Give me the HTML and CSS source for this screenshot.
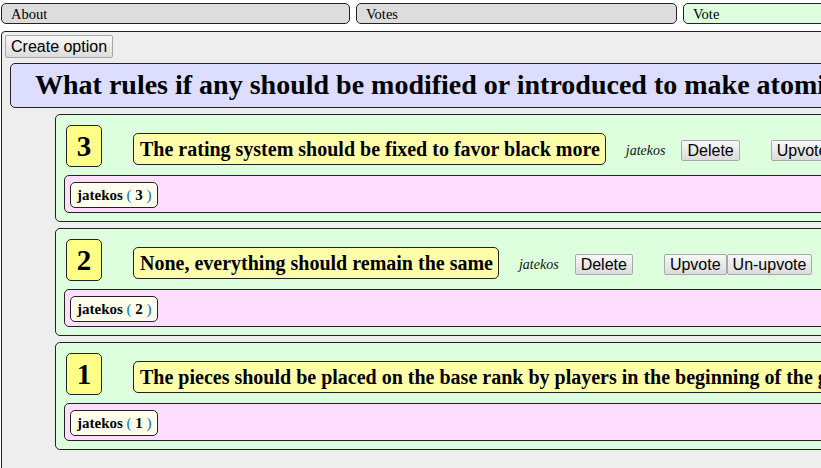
FILE: index.html
```html
<!DOCTYPE html>
<html lang="en">
<head>
  <meta charset="UTF-8" />
  <title>Vote</title>
  <link rel="stylesheet" href="styles.css">
</head>
<body>

  <!-- Tabs -->
  <div class="tabs">
    <div class="tab tab-about">About</div>
    <div class="tab tab-votes">Votes</div>
    <div class="tab tab-vote active">Vote</div>
  </div>

  <!-- Vote panel -->
  <div class="panel">
    <button class="btn">Create option</button>
    <div class="question">What rules if any should be modified or introduced to make atomic chess more balanced?</div>

    <div class="option">
      <div class="option-head">
        <div class="count">3</div>
        <div class="option-text">The rating system should be fixed to favor black more</div>
        <span class="author">jatekos</span>
        <button class="btn btn-delete">Delete</button>
        <button class="btn btn-up">Upvote</button><button class="btn">Un-upvote</button>
      </div>
      <div class="voters">
        <span class="voter">jatekos <span class="paren">(</span> 3 <span class="paren">)</span></span>
      </div>
    </div>

    <div class="option">
      <div class="option-head">
        <div class="count">2</div>
        <div class="option-text">None, everything should remain the same</div>
        <span class="author">jatekos</span>
        <button class="btn btn-delete">Delete</button>
        <button class="btn btn-up">Upvote</button><button class="btn">Un-upvote</button>
      </div>
      <div class="voters">
        <span class="voter">jatekos <span class="paren">(</span> 2 <span class="paren">)</span></span>
      </div>
    </div>

    <div class="option">
      <div class="option-head">
        <div class="count">1</div>
        <div class="option-text">The pieces should be placed on the base rank by players in the beginning of the game</div>
        <span class="author">jatekos</span>
        <button class="btn btn-delete">Delete</button>
        <button class="btn btn-up">Upvote</button><button class="btn">Un-upvote</button>
      </div>
      <div class="voters">
        <span class="voter">jatekos <span class="paren">(</span> 1 <span class="paren">)</span></span>
      </div>
    </div>
  </div>

</body>
</html>
```

FILE: styles.css
```css
* {
  box-sizing: border-box;
}

html, body {
  overflow: hidden;
}

body {
  margin: 0;
  padding: 3px 1px 0 1px;
  background: #fff;
  font-family: "Liberation Serif", "Times New Roman", serif;
  color: #000;
  width: max-content;
}

/* Tabs */
.tabs {
  display: flex;
  gap: 6px;
}

.tab {
  height: 21px;
  padding: 1px 9px 0;
  font-size: 14.5px;
  line-height: 18px;
  background: #ddd;
  border: 1px solid #222;
  border-radius: 5px;
}

.tab-about { width: 349px; }
.tab-votes { width: 321px; }
.tab-vote { width: 600px; }

.tab.active {
  background: #dfd;
}

/* Panel */
.panel {
  margin-top: 7px;
  padding: 3px 3px 30px;
  background: #eee;
  border: 1px solid #222;
  border-radius: 4px;
}

.btn {
  font-family: "Liberation Sans", Arial, sans-serif;
  font-size: 16px;
  line-height: 17px;
  padding: 1px 5px 1px;
  color: #000;
  background: linear-gradient(#f8f8f8, #dcdcdc);
  border: 1px solid #a8a8a8;
  border-radius: 2px;
  cursor: pointer;
}

.panel > .btn {
  padding: 2px 5px 2px;
}

.question {
  margin: 5px 0 0 5px;
  padding: 5px 24px 7px;
  font-size: 28px;
  font-weight: bold;
  line-height: 31px;
  white-space: nowrap;
  background: #ddf;
  border: 1px solid #222;
  border-radius: 5px;
}

/* Options */
.option {
  margin: 6px 0 0 50px;
  padding: 10px 8px 8px;
  background: #dfd;
  border: 1px solid #222;
  border-radius: 5px;
}

.option + .option {
  margin-top: 6px;
}

.option-head {
  display: flex;
  align-items: center;
  white-space: nowrap;
}

.count {
  width: 36px;
  height: 42px;
  margin-left: 2px;
  font-size: 29px;
  font-weight: bold;
  line-height: 40px;
  text-align: center;
  background: #ff8;
  border: 1px solid #222;
  border-radius: 5px;
}

.option-text {
  margin: 5px 0 0 31px;
  padding: 0 5px 0 6px;
  height: 32px;
  font-size: 20px;
  font-weight: bold;
  line-height: 30px;
  background: #ffa;
  border: 1px solid #222;
  border-radius: 5px;
}

.author {
  margin: 10px 0 0 20px;
  font-size: 14px;
  font-style: italic;
  color: #111;
}

.btn-delete {
  margin: 8px 0 0 16px;
}

.btn-up {
  margin: 8px 0 0 31px;
}

.btn-up + .btn {
  margin-top: 8px;
}

.voters {
  margin-top: 8px;
  padding: 6px 5px 4px;
  background: #fdf;
  border: 1px solid #222;
  border-radius: 5px;
}

.voter {
  display: inline-block;
  height: 26px;
  padding: 0 5px 0 6px;
  font-size: 15px;
  font-weight: bold;
  line-height: 24px;
  background: #ffe;
  border: 1px solid #222;
  border-radius: 5px;
}

.paren {
  font-weight: normal;
  color: #0a6fb0;
}
```
